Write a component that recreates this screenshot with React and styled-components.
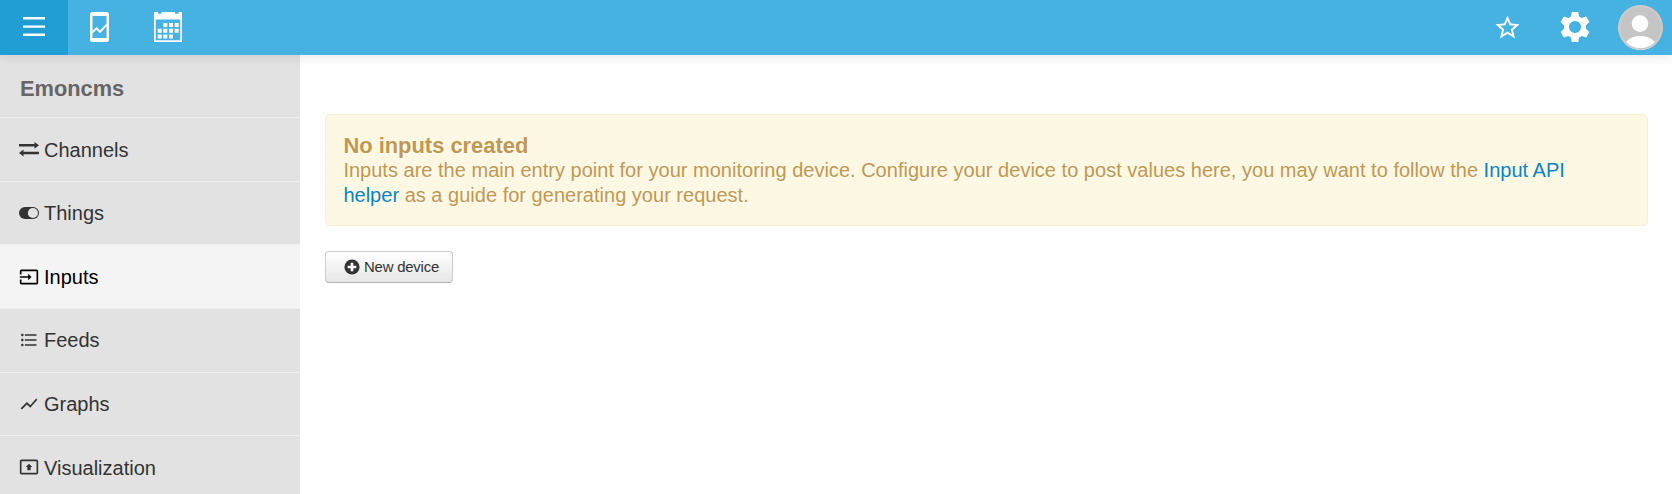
import React from "react";
import styled, { createGlobalStyle, css } from "styled-components";
import { MdInput, MdFormatListBulleted, MdShowChart, MdPresentToAll, MdStarBorder } from "react-icons/md";

const GlobalStyle = createGlobalStyle`
  * { box-sizing: border-box; }
  body {
    margin: 0;
    background: #fff;
    color: #333;
    font: 20px/25px "Liberation Sans", Arial, sans-serif;
    overflow: hidden;
  }
`;

const Page = styled.div`
  display: flex;
  flex-direction: column;
  height: 494px;
`;

const TopBar = styled.header`
  display: flex;
  justify-content: space-between;
  flex: none;
  height: 55px;
  background: #45b2e2;
  position: relative;
  box-shadow: 0 1px 12px rgba(0, 0, 0, 0.11);
`;

const NavGroup = styled.nav`
  display: flex;
`;

const NavItem = styled.a`
  display: flex;
  align-items: center;
  justify-content: center;
  width: ${(p) => p.$width || 68}px;
  height: 55px;
  padding-bottom: 1px;
  color: #fff;
  background: ${(p) => (p.$active ? "#209ed3" : "transparent")};
  svg { display: block; flex: none; }
`;

const Avatar = styled.span`
  display: block;
  width: 45px;
  height: 45px;
  margin-top: 1px;
  border-radius: 50%;
  background: #c5c5c5;
  overflow: hidden;
`;

const Body = styled.div`
  display: flex;
  flex: 1;
  min-height: 0;
`;

const Sidebar = styled.aside`
  flex: none;
  width: 300px;
  background: #e2e2e2;
  overflow: hidden;
`;

const SidebarTitle = styled.h4`
  margin: 0;
  padding: 21px 20px 0;
  height: 62.2px;
  font-size: 21.8px;
  line-height: 25px;
  color: #666;
`;

const SidebarLink = styled.a`
  display: flex;
  align-items: center;
  gap: 5px;
  height: 63.6px;
  padding: 0 0 0 19px;
  border-top: 1px solid #f1f1f1;
  color: #333;
  ${(p) =>
    p.$active &&
    css`
      background: #f4f4f4;
      color: #000;
    `}
  svg { display: block; flex: none; width: 20px; height: 20px; }
`;

const LinkLabel = styled.span`
  padding-top: 1.4px;
`;

const Main = styled.main`
  flex: 1;
  padding: 59px 24px 0 25px;
`;

const Alert = styled.section`
  height: 112px;
  padding: 18px 43px 0 17.4px;
  border: 1px solid #fbeed5;
  border-radius: 5px;
  background: #fcf8e3;
  color: #c09853;
  text-shadow: 0 1px 0 rgba(255, 255, 255, 0.5);
`;

const AlertTitle = styled.h4`
  margin: 0;
  font-size: 21.9px;
  line-height: 25px;
`;

const AlertText = styled.p`
  margin: 0;
  letter-spacing: 0.014px;
`;

const Link = styled.a`
  color: #0a84c6;
`;

const Button = styled.button`
  display: flex;
  align-items: center;
  gap: 4px;
  width: 128px;
  height: 32px;
  margin-top: 25px;
  padding: 0 0 0 18px;
  border: 1px solid #ccc;
  border-bottom-color: #b3b3b3;
  border-radius: 4px;
  background: linear-gradient(#fff, #e6e6e6);
  color: #333;
  font: 14.9px/25px "Liberation Sans", Arial, sans-serif;
  letter-spacing: -0.2px;
  white-space: nowrap;
`;

const MenuIcon = () => (
  <svg width="22" height="20" viewBox="0 0 22 20" fill="currentColor">
    <path d="M0 0h22v2.4H0zM0 8.4h22v2.4H0zM0 16.6h22V19H0z" />
  </svg>
);

const AppsIcon = () => (
  <svg width="19" height="30" viewBox="0 0 19 30">
    <path fill="currentColor" fillRule="evenodd" d="M2.500 0h14A2.500 2.500 0 0 1 19 2.500v25a2.500 2.500 0 0 1-2.500 2.500h-14A2.500 2.500 0 0 1 0 27.500v-25A2.500 2.500 0 0 1 2.500 0zM2.500 4v22h14V4z" />
    <path fill="none" stroke="currentColor" strokeWidth="1.800" d="M2 20.500l4.600-4.200 3.400 3.600 7-7.600" />
  </svg>
);

const CalendarIcon = () => (
  <svg width="28" height="30" viewBox="0 0 28 30" fill="currentColor">
    <path fillRule="evenodd" d="M0 0h4v1.700h3.500V0h13.500v1.700h3.500V0H28v30H0zM1.700 7.600v20.700h24.600V7.600z" />
    <path d="M9.300 11h4v4h-4zM15 11h4v4h-4zM20.700 11h4v4h-4zM3.700 16.700h4v4h-4zM9.300 16.700h4v4h-4zM15 16.700h4v4h-4zM20.700 16.700h4v4h-4zM3.700 22.400h4v4h-4zM9.300 22.400h4v4h-4zM15 22.400h4v4h-4z" />
  </svg>
);

const GearIcon = () => (
  <svg width="36" height="36" viewBox="0 0 36 36">
    <path
      fill="currentColor"
      fillRule="evenodd"
      d="M14.800 3h6.400l.9 4.600 2.600 1.500 4.500-1.500 3.100 5.300-3.300 3.300v3.600l3.300 3.300-3.100 5.300-4.500-1.500-2.600 1.500-.9 4.600h-6.400l-.9-4.600-2.600-1.500-4.500 1.500-3.100-5.300L7 19.800v-3.600l-3.300-3.300 3.100-5.300 4.500 1.500 2.600-1.500zM18 11.900a6.100 6.100 0 1 0 0 12.200 6.100 6.100 0 0 0 0-12.200z"
    />
  </svg>
);

const PersonIcon = () => (
  <svg width="45" height="45" viewBox="0 0 45 45">
    <circle cx="22" cy="18.600" r="8.300" fill="#fff" />
    <ellipse cx="22.300" cy="45" rx="17.500" ry="14" fill="#fff" />
    <circle cx="22.500" cy="22.500" r="21.500" fill="none" stroke="#cbcbcb" strokeWidth="2" />
  </svg>
);

const ChannelsIcon = () => (
  <svg viewBox="0 0 20 20" fill="currentColor">
    <path d="M0 5.100h15.500V2.900l4.500 3.400-4.500 3.400V7.600H0zM20 12.700H4.500v-2.100L0 14l4.500 3.400v-2.200H20z" />
  </svg>
);

const ToggleIcon = () => (
  <svg viewBox="0 0 20 20">
    <rect x="0" y="4" width="20" height="12" rx="6" fill="currentColor" />
    <circle cx="13.900" cy="10" r="5.100" fill="#e2e2e2" />
  </svg>
);

const PlusIcon = () => (
  <svg width="16" height="16" viewBox="0 0 16 16">
    <circle cx="8" cy="8" r="7.600" fill="#333" />
    <path d="M6.700 3.700h2.600v3h3v2.600h-3v3H6.700v-3h-3V6.700h3z" fill="#fff" />
  </svg>
);

const links = [
  { label: "Channels", icon: ChannelsIcon },
  { label: "Things", icon: ToggleIcon },
  { label: "Inputs", icon: MdInput, active: true },
  { label: "Feeds", icon: MdFormatListBulleted },
  { label: "Graphs", icon: MdShowChart },
  { label: "Visualization", icon: MdPresentToAll },
];

export default function App() {
  return (
    <Page>
      <GlobalStyle />
      <TopBar>
        <NavGroup>
          <NavItem $active><MenuIcon /></NavItem>
          <NavItem $width={63}><AppsIcon /></NavItem>
          <NavItem $width={74}><CalendarIcon /></NavItem>
        </NavGroup>
        <NavGroup>
          <NavItem><MdStarBorder size={29} /></NavItem>
          <NavItem><GearIcon /></NavItem>
          <NavItem $width={63}><Avatar><PersonIcon /></Avatar></NavItem>
        </NavGroup>
      </TopBar>
      <Body>
        <Sidebar>
          <SidebarTitle>Emoncms</SidebarTitle>
          {links.map(({ label, icon: Icon, active }) => (
            <SidebarLink key={label} $active={active}>
              <Icon />
              <LinkLabel>{label}</LinkLabel>
            </SidebarLink>
          ))}
        </Sidebar>
        <Main>
          <Alert>
            <AlertTitle>No inputs created</AlertTitle>
            <AlertText>
              Inputs are the main entry point for your monitoring device. Configure your device to post values here, you
              may want to follow the <Link>Input API helper</Link> as a guide for generating your request.
            </AlertText>
          </Alert>
          <Button><PlusIcon />New device</Button>
        </Main>
      </Body>
    </Page>
  );
}
